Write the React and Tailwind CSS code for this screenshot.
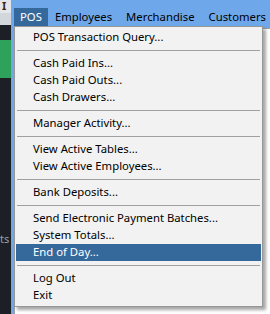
import React from 'react';

const font = { fontFamily: '"Noto Sans", "Segoe UI", sans-serif' };

const menu = [
  { label: 'POS Transaction Query...' },
  'sep',
  { label: 'Cash Paid Ins...' },
  { label: 'Cash Paid Outs...' },
  { label: 'Cash Drawers...' },
  'sep',
  { label: 'Manager Activity...' },
  'sep',
  { label: 'View Active Tables...' },
  { label: 'View Active Employees...' },
  'sep',
  { label: 'Bank Deposits...' },
  'sep',
  { label: 'Send Electronic Payment Batches...' },
  { label: 'System Totals...' },
  { label: 'End of Day...', active: true },
  'sep',
  { label: 'Log Out' },
  { label: 'Exit' },
];

export default function App() {
  return (
    <div className="flex w-[270px] h-[314px] overflow-hidden bg-[#1c2026] text-[11.3px]" style={font}>
      {/* Left: other window peeking */}
      <div className="w-[11px] flex flex-col shrink-0">
        <div className="h-[13px] bg-[#e3e7eb] text-[#3a2a10] text-[11px] leading-[12px] pl-[2px] font-bold">I</div>
        <div className="h-[12px] bg-[#d2d7dc]" />
        <div className="h-[15px] bg-[#1c2026]" />
        <div className="h-[38px] bg-[#2ea15a]" />
        <div className="flex-1 bg-[#1c2026] pt-[155px] text-[#9aa0a8] text-[11px] leading-none">ts</div>
      </div>

      {/* Right: main window */}
      <div className="flex-1 flex flex-col bg-[#6ea7ea] pl-[3px] relative">
        <div className="h-[8px] overflow-hidden">
          <div className="-mt-[12px] pl-[146px] text-[#1b1b1b] text-[12px] leading-[14px] whitespace-nowrap tracking-[3px]">TOTS — Au Stations</div>
        </div>
        <div className="h-[18px] flex items-center text-black">
          <div className="h-full flex items-center px-[6px] bg-[#35689b] text-white">POS</div>
          <div className="px-[7px]">Employees</div>
          <div className="px-[7px]">Merchandise</div>
          <div className="px-[7px]">Customers</div>
        </div>
        <div className="flex-1 mt-[2px] bg-white border-l border-t border-[#a0a0a0]" />

        {/* Dropdown */}
        <div className="absolute left-[3px] top-[26px] w-[249px] bg-[#f2f2f2] border border-[#979797] py-[2px] px-[1px] shadow-[3px_3px_3px_rgba(0,0,0,0.35)]">
          {menu.map((m, i) =>
            m === 'sep' ? (
              <div key={i} className="h-[9px] flex items-center px-[1px]">
                <div className="h-px w-full bg-[#a0a0a0]" />
              </div>
            ) : (
              <div
                key={i}
                className={`h-[17px] flex items-center pl-[17px] whitespace-nowrap ${
                  m.active ? 'bg-[#35689b] text-white' : 'text-black'
                }`}
              >
                {m.label}
              </div>
            )
          )}
        </div>
      </div>
    </div>
  );
}
